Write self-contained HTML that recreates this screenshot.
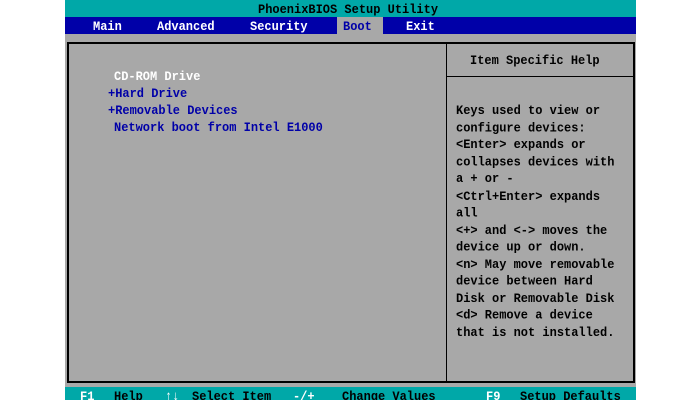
<!DOCTYPE html>
<html><head><meta charset="utf-8"><style>
html,body{margin:0;padding:0;background:#fff;width:700px;height:400px;overflow:hidden;position:relative}
div{position:absolute}
.t{font-family:"Liberation Mono",monospace;font-size:12px;line-height:14px;white-space:pre;font-weight:bold;transform:scaleY(1.1);transform-origin:0 0}
</style></head><body>
<div style="left:65px;top:0;width:571px;height:17px;background:#00a8a8"></div>
<div style="left:65px;top:17px;width:571px;height:17px;background:#0000a8"></div>
<div style="left:65px;top:34px;width:571px;height:353px;background:#a8a8a8"></div>
<div style="left:65px;top:387px;width:571px;height:13px;background:#00a8a8"></div>
<div style="left:337px;top:17px;width:46px;height:17px;background:#a8a8a8"></div>
<div style="left:67px;top:42px;width:564px;height:337px;border:1px solid #000;border-width:2px 2px 2px 2px"></div>
<div style="left:446px;top:42px;width:1px;height:339px;background:#000"></div>
<div style="left:446px;top:76px;width:187px;height:1px;background:#000"></div>

<div class="t" style="left:258px;top:2px;color:#000">PhoenixBIOS Setup Utility</div>
<div class="t" style="left:93px;top:19px;color:#fff">Main</div>
<div class="t" style="left:157px;top:19px;color:#fff">Advanced</div>
<div class="t" style="left:250px;top:19px;color:#fff">Security</div>
<div class="t" style="left:343px;top:19px;color:#0000a8">Boot</div>
<div class="t" style="left:406px;top:19px;color:#fff">Exit</div>

<div class="t" style="left:114px;top:69px;color:#fff">CD-ROM Drive</div>
<div class="t" style="left:108px;top:86px;color:#0000a8">+Hard Drive</div>
<div class="t" style="left:108px;top:103px;color:#0000a8">+Removable Devices</div>
<div class="t" style="left:114px;top:120px;color:#0000a8">Network boot from Intel E1000</div>

<div class="t" style="left:470px;top:53px;color:#000">Item Specific Help</div>
<div class="t" style="left:456px;top:103px;color:#000;line-height:15.5px">Keys used to view or
configure devices:
&lt;Enter&gt; expands or
collapses devices with
a + or -
&lt;Ctrl+Enter&gt; expands
all
&lt;+&gt; and &lt;-&gt; moves the
device up or down.
&lt;n&gt; May move removable
device between Hard
Disk or Removable Disk
&lt;d&gt; Remove a device
that is not installed.</div>

<div class="t" style="left:80px;top:389px;color:#fff">F1</div>
<div class="t" style="left:114px;top:389px;color:#000">Help</div>
<div class="t" style="left:165px;top:389px;color:#fff">↑↓</div>
<div class="t" style="left:192px;top:389px;color:#000">Select Item</div>
<div class="t" style="left:293px;top:389px;color:#fff">-/+</div>
<div class="t" style="left:342px;top:389px;color:#000">Change Values</div>
<div class="t" style="left:486px;top:389px;color:#fff">F9</div>
<div class="t" style="left:520px;top:389px;color:#000">Setup Defaults</div>
</body></html>
